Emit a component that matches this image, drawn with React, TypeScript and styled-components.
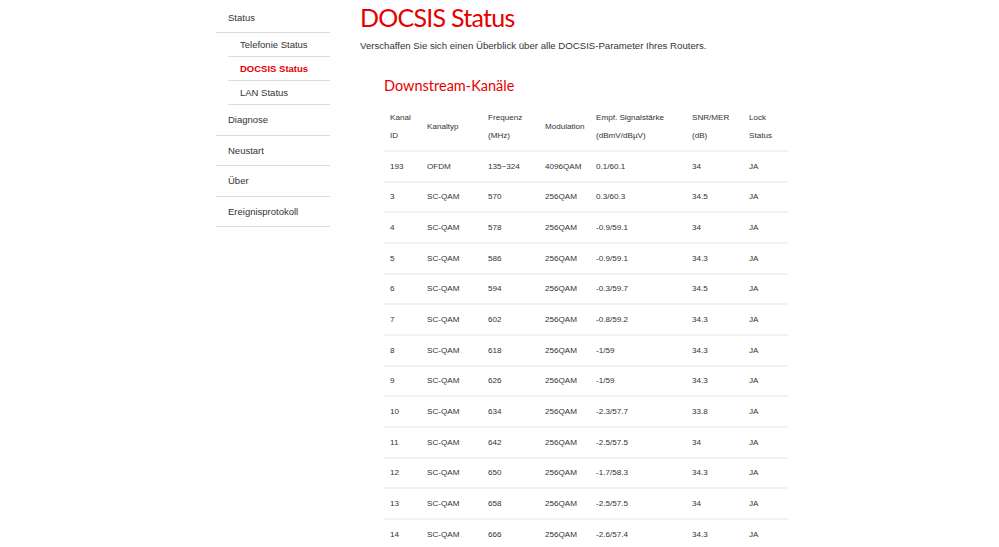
import React from "react"
import styled, { createGlobalStyle } from "styled-components"

const GlobalStyle = createGlobalStyle`
    html, body {
        margin: 0;
        padding: 0;
        background: #ffffff;
        font-family: "Liberation Sans", Arial, sans-serif;
        color: #333333;
    }
    * {
        box-sizing: border-box;
    }
`

const Page = styled.div`
    display: flex;
    align-items: flex-start;
    gap: 30px;
    padding-left: 216px;
    width: 999px;
`

const Sidebar = styled.nav`
    width: 114px;
    flex-shrink: 0;
    padding-top: 3px;
`

const NavList = styled.ul`
    list-style: none;
    margin: 0;
    padding: 0;
`

const SubList = styled.ul`
    list-style: none;
    margin: 0 0 0 12px;
    padding: 0;
`

const NavItem = styled.li<{ $h: number }>`
    height: ${(p) => p.$h}px;
    display: flex;
    align-items: center;
    padding-left: 12px;
    border-bottom: 1px solid #dcdcdc;
    font-size: 9.5px;
    color: #333333;
`

const SubItem = styled.li<{ $active?: boolean }>`
    height: 24px;
    display: flex;
    align-items: center;
    padding-left: 12px;
    border-bottom: 1px solid #dcdcdc;
    font-size: 9.5px;
    font-weight: ${(p) => (p.$active ? 700 : 400)};
    color: ${(p) => (p.$active ? "#e60000" : "#333333")};
`

const Main = styled.main`
    flex: 1;
`

const Title = styled.h1`
    margin: 0;
    font-family: Lato, "Open Sans", sans-serif;
    font-weight: 400;
    font-size: 25px;
    line-height: 34px;
    color: #e60000;
    letter-spacing: -0.75px;
`

const Intro = styled.p`
    margin: 4px 0 0;
    font-size: 9.65px;
    line-height: 16px;
    color: #333333;
`

const Section = styled.section`
    margin-left: 24px;
`

const SectionTitle = styled.h2`
    margin: 22px 0 8px;
    font-family: Lato, "Open Sans", sans-serif;
    font-weight: 400;
    font-size: 14.5px;
    line-height: 20px;
    color: #e60000;
`

const Table = styled.table`
    width: 404px;
    table-layout: fixed;
    border-collapse: collapse;
    font-size: 8.1px;
    color: #333333;
`

const Col = styled.col<{ $w: number }>`
    width: ${(p) => p.$w}px;
`

const Th = styled.th`
    text-align: left;
    font-weight: 400;
    padding: 5px 6px;
    line-height: 18px;
    vertical-align: middle;
`

const Td = styled.td`
    height: 30.67px;
    padding: 0 6px;
    border-top: 2px solid #f2f2f2;
    vertical-align: middle;
    white-space: nowrap;
`

const widths = [37, 61, 57, 51, 96, 57, 45]

const headers: string[][] = [
    ["Kanal", "ID"],
    ["Kanaltyp"],
    ["Frequenz", "(MHz)"],
    ["Modulation"],
    ["Empf. Signalstärke", "(dBmV/dBµV)"],
    ["SNR/MER", "(dB)"],
    ["Lock", "Status"],
]

const rows: string[][] = [
    ["193", "OFDM", "135~324", "4096QAM", "0.1/60.1", "34", "JA"],
    ["3", "SC-QAM", "570", "256QAM", "0.3/60.3", "34.5", "JA"],
    ["4", "SC-QAM", "578", "256QAM", "-0.9/59.1", "34", "JA"],
    ["5", "SC-QAM", "586", "256QAM", "-0.9/59.1", "34.3", "JA"],
    ["6", "SC-QAM", "594", "256QAM", "-0.3/59.7", "34.5", "JA"],
    ["7", "SC-QAM", "602", "256QAM", "-0.8/59.2", "34.3", "JA"],
    ["8", "SC-QAM", "618", "256QAM", "-1/59", "34.3", "JA"],
    ["9", "SC-QAM", "626", "256QAM", "-1/59", "34.3", "JA"],
    ["10", "SC-QAM", "634", "256QAM", "-2.3/57.7", "33.8", "JA"],
    ["11", "SC-QAM", "642", "256QAM", "-2.5/57.5", "34", "JA"],
    ["12", "SC-QAM", "650", "256QAM", "-1.7/58.3", "34.3", "JA"],
    ["13", "SC-QAM", "658", "256QAM", "-2.5/57.5", "34", "JA"],
    ["14", "SC-QAM", "666", "256QAM", "-2.6/57.4", "34.3", "JA"],
]

export default function App() {
    return (
        <>
            <GlobalStyle />
            <Page>
                <Sidebar>
                    <NavList>
                        <NavItem $h={30}>Status</NavItem>
                        <li>
                            <SubList>
                                <SubItem>Telefonie Status</SubItem>
                                <SubItem $active>DOCSIS Status</SubItem>
                                <SubItem>LAN Status</SubItem>
                            </SubList>
                        </li>
                        <NavItem $h={30.5}>Diagnose</NavItem>
                        <NavItem $h={30.5}>Neustart</NavItem>
                        <NavItem $h={30.5}>Über</NavItem>
                        <NavItem $h={30.5}>Ereignisprotokoll</NavItem>
                    </NavList>
                </Sidebar>
                <Main>
                    <Title>DOCSIS Status</Title>
                    <Intro>Verschaffen Sie sich einen Überblick über alle DOCSIS-Parameter Ihres Routers.</Intro>
                    <Section>
                        <SectionTitle>Downstream-Kanäle</SectionTitle>
                        <Table>
                            <colgroup>
                                {widths.map((w, i) => (
                                    <Col key={i} $w={w} />
                                ))}
                            </colgroup>
                            <thead>
                                <tr>
                                    {headers.map((h, i) => (
                                        <Th key={i}>
                                            {h.map((line, j) => (
                                                <React.Fragment key={j}>
                                                    {j > 0 && <br />}
                                                    {line}
                                                </React.Fragment>
                                            ))}
                                        </Th>
                                    ))}
                                </tr>
                            </thead>
                            <tbody>
                                {rows.map((r, i) => (
                                    <tr key={i}>
                                        {r.map((c, j) => (
                                            <Td key={j}>{c}</Td>
                                        ))}
                                    </tr>
                                ))}
                            </tbody>
                        </Table>
                    </Section>
                </Main>
            </Page>
        </>
    )
}
